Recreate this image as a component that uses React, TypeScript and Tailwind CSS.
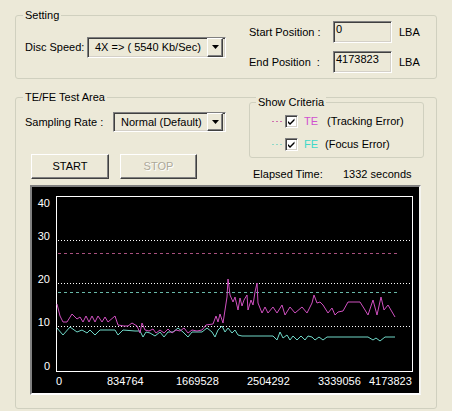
import React from "react";

const te: [number, number][] = [
  [57, 304], [60, 316], [63, 322], [67, 322], [72, 314], [77, 319], [80, 317], [83, 322],
  [86, 316], [89, 322], [92, 316], [95, 322], [98, 316], [102, 322], [105, 317], [108, 322],
  [115, 316], [118, 325], [124, 326], [128, 326], [132, 323], [137, 326], [140, 333], [142, 323],
  [145, 330], [149, 331], [153, 329], [156, 333], [160, 330], [164, 333], [168, 329], [172, 333],
  [176, 330], [180, 331], [184, 328], [188, 333], [192, 330], [197, 331], [202, 330], [206, 325],
  [213, 324], [216, 316], [218, 322], [220, 314], [223, 323], [227, 297], [228, 279], [230, 295],
  [233, 302], [235, 297], [238, 310], [240, 298], [242, 306], [244, 300], [247, 295], [248, 310],
  [251, 300], [253, 305], [255, 292], [257, 283], [258, 303], [262, 313], [265, 307], [268, 313],
  [273, 307], [277, 313], [282, 305], [285, 315], [290, 307], [295, 313], [302, 307], [307, 313],
  [312, 303], [314, 295], [317, 303], [320, 302], [323, 305], [328, 313], [332, 308], [335, 315],
  [338, 312], [343, 311], [348, 302], [360, 302], [365, 310], [368, 315], [373, 300], [377, 315],
  [381, 297], [384, 310], [388, 305], [395, 317],
];

const fe: [number, number][] = [
  [57, 328], [63, 335], [70, 327], [77, 332], [82, 330], [87, 333], [90, 330], [95, 335],
  [100, 330], [115, 330], [118, 335], [123, 330], [135, 331], [140, 331], [143, 337], [146, 332],
  [150, 333], [155, 336], [160, 332], [164, 337], [168, 332], [173, 332], [178, 328], [183, 332],
  [188, 337], [192, 332], [202, 332], [207, 328], [212, 332], [215, 337], [218, 330], [222, 326],
  [225, 332], [228, 328], [232, 333], [235, 330], [238, 335], [242, 336], [273, 336], [277, 340],
  [280, 332], [283, 338], [287, 335], [290, 340], [293, 336], [297, 340], [301, 336], [305, 340],
  [308, 336], [312, 337], [315, 340], [319, 337], [323, 340], [327, 337], [368, 337], [373, 340],
  [376, 338], [380, 341], [385, 337], [395, 337],
];

const pts = (a: [number, number][]) => a.map(([x, y]) => `${x},${y}`).join(" ");

const inset =
  "border border-t-[#808080] border-l-[#808080] border-b-white border-r-white shadow-[inset_1px_1px_0_#404040,inset_-1px_-1px_0_#d4d0c8]";
const raised =
  "border border-t-white border-l-white border-b-[#404040] border-r-[#404040] shadow-[inset_-1px_-1px_0_#808080]";

function Combo({ text, w, h }: { text: string; w: string; h: string }) {
  return (
    <div className={`${inset} ${w} ${h} bg-[#ECE9D8] flex items-center pl-[7px] pr-[2px]`}>
      <span className="flex-1 whitespace-nowrap">{text}</span>
      <div className={`${raised} w-[16px] h-full bg-[#ECE9D8] flex items-center justify-center`}>
        <svg width="7" height="4" viewBox="0 0 7 4">
          <path d="M0 0H7L3.5 4Z" fill="#000" />
        </svg>
      </div>
    </div>
  );
}

function Check() {
  return (
    <div className={`${inset} w-[13px] h-[13px] bg-white flex items-center justify-center`}>
      <svg width="7" height="7" viewBox="0 0 7 7">
        <path d="M0 3L2 5L6.5 0.5V2.5L2 7L0 5Z" fill="#000" />
      </svg>
    </div>
  );
}

function Dashes({ color }: { color: string }) {
  return (
    <div className="w-[13px] flex gap-[2px] items-center">
      <div className={`w-[2px] h-[1px] ${color}`} />
      <div className={`w-[2px] h-[1px] ${color}`} />
      <div className={`w-[2px] h-[1px] ${color}`} />
    </div>
  );
}

function Group({ label, className, children, lx }: { label: string; className: string; children: React.ReactNode; lx: string }) {
  return (
    <div className={`relative border border-[#D0D0BF] rounded-[3px] ${className}`}>
      <span className={`absolute ${lx} -top-[8px] px-[2px] bg-[#ECE9D8] leading-[14px]`}>{label}</span>
      {children}
    </div>
  );
}

export default function App() {
  return (
    <div className="w-[452px] h-[411px] overflow-hidden bg-[#ECE9D8] pt-[15px] pl-[15px] text-[11px] text-black font-['Liberation_Sans',Arial,sans-serif]">
      <Group label="Setting" lx="left-[7px]" className="w-[422px] h-[64px] flex items-center">
        <div className="w-[210px] pl-[9px] flex items-center justify-between">
          <span>Disc Speed:</span>
          <Combo text="4X => ( 5540 Kb/Sec)" w="w-[139px]" h="h-[21px]" />
        </div>
        <div className="ml-[23px] flex flex-col gap-[8px]">
          <div className="flex items-center">
            <span className="w-[84px]">Start Position :</span>
            <div className={`${inset} w-[59px] h-[22px] pl-[2px] leading-[15px]`}>0</div>
            <span className="ml-[7px]">LBA</span>
          </div>
          <div className="flex items-center">
            <span className="w-[84px] whitespace-pre">End Position  :</span>
            <div className={`${inset} w-[59px] h-[22px] pl-[2px] leading-[15px]`}>4173823</div>
            <span className="ml-[7px]">LBA</span>
          </div>
        </div>
      </Group>

      <Group label="TE/FE Test Area" lx="left-[7px]" className="mt-[18px] w-[422px] h-[312px]">
        <div className="flex h-[87px]">
          <div className="w-[210px]">
            <div className="mt-[14px] pl-[9px] flex items-center justify-between">
              <span>Sampling Rate :</span>
              <Combo text="Normal (Default)" w="w-[113px]" h="h-[20px]" />
            </div>
            <div className="mt-[22px] pl-[15px] flex gap-[11px]">
              <div className={`${raised} w-[78px] h-[25px] flex items-center justify-center`}>START</div>
              <div className={`${raised} w-[77px] h-[25px] flex items-center justify-center text-[#ACA899] [text-shadow:1px_1px_0_#fff]`}>
                STOP
              </div>
            </div>
          </div>
          <div className="ml-[23px]">
            <Group label="Show Criteria" lx="left-[6px]" className="mt-[4px] w-[175px] h-[56px] pt-[12px] flex flex-col gap-[10px]">
              <div className="flex items-center h-[13px] pl-[22px]">
                <Dashes color="bg-[#D070B0]" />
                <Check />
                <span className="ml-[6px] w-[23px] text-[#D050D0]">TE</span>
                <span>(Tracking Error)</span>
              </div>
              <div className="flex items-center h-[13px] pl-[22px]">
                <Dashes color="bg-[#90D8C8]" />
                <Check />
                <span className="ml-[6px] w-[21px] text-[#40D8C8]">FE</span>
                <span>(Focus Error)</span>
              </div>
            </Group>
            <div className="mt-[8px] pl-[4px] flex">
              <span className="w-[90px]">Elapsed Time:</span>
              <span>1332 seconds</span>
            </div>
          </div>
        </div>

        <div className="ml-[14px] w-[391px] h-[210px] bg-black border-2 border-t-[#808080] border-l-[#808080] border-b-white border-r-[#f4f4f0]">
          <svg width="387" height="206" viewBox="32 187 387 206" className="block">
            <rect x="56.5" y="196.5" width="356" height="175" fill="none" stroke="#fff" />
            <g stroke="#fff" strokeDasharray="1 2">
              <line x1="58" y1="240.5" x2="410" y2="240.5" />
              <line x1="58" y1="283.5" x2="410" y2="283.5" />
              <line x1="58" y1="326.5" x2="410" y2="326.5" />
            </g>
            <line x1="58" y1="253.5" x2="400" y2="253.5" stroke="#A8507E" strokeDasharray="3 3" />
            <line x1="58" y1="292.5" x2="400" y2="292.5" stroke="#68B8A8" strokeDasharray="3 3" />
            <polyline points={pts(fe)} fill="none" stroke="#70D8C8" strokeWidth="1" />
            <polyline points={pts(te)} fill="none" stroke="#D050C0" strokeWidth="1" />
            <g fill="#fff" fontSize="11" fontFamily="Liberation Sans, Arial, sans-serif" textAnchor="end" dominantBaseline="central">
              <text x="50" y="203">40</text>
              <text x="50" y="236">30</text>
              <text x="50" y="279">20</text>
              <text x="50" y="322">10</text>
              <text x="50" y="366">0</text>
            </g>
            <g fill="#fff" fontSize="11" fontFamily="Liberation Sans, Arial, sans-serif" dominantBaseline="central">
              <text x="56" y="381">0</text>
              <text x="107" y="381">834764</text>
              <text x="176" y="381">1669528</text>
              <text x="247" y="381">2504292</text>
              <text x="318" y="381">3339056</text>
              <text x="369" y="381">4173823</text>
            </g>
          </svg>
        </div>
      </Group>
    </div>
  );
}
